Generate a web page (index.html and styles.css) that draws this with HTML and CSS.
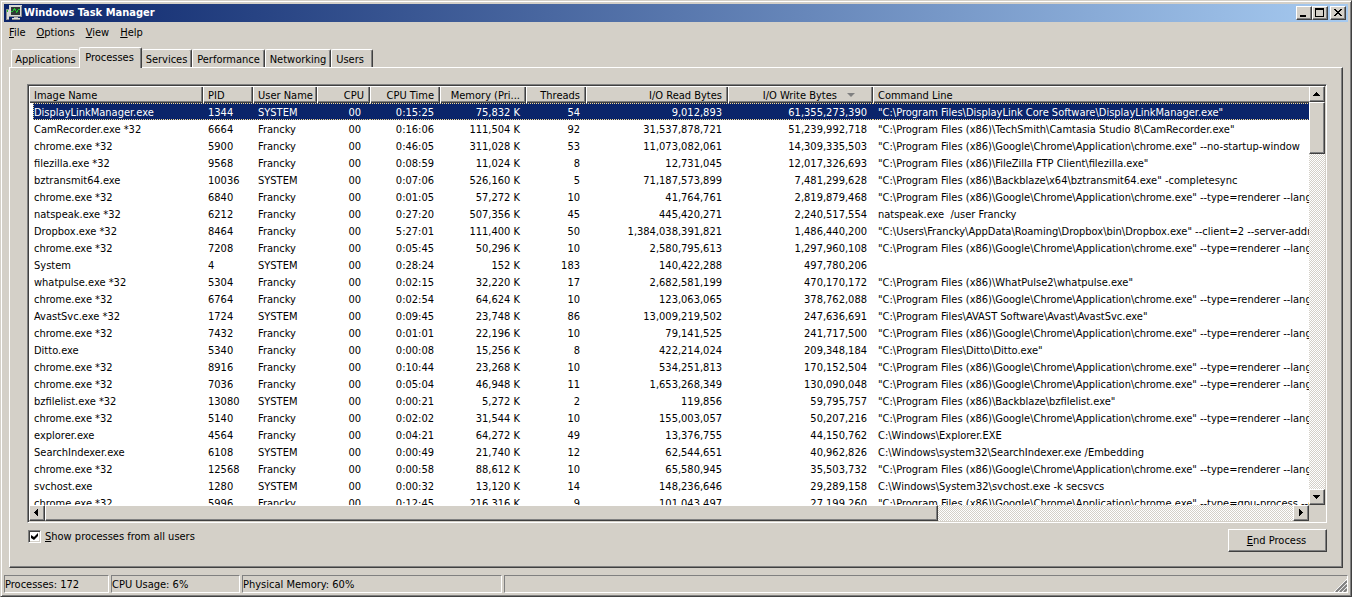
FILE: index.html
```html
<!DOCTYPE html>
<html lang="en">
<head>
<meta charset="utf-8">
<title>Windows Task Manager</title>
<link rel="stylesheet" href="styles.css">
</head>
<body>
<div class="window">
  <header class="titlebar">
    <svg class="app-icon" width="16" height="16" viewBox="0 0 16 16" shape-rendering="crispEdges" aria-hidden="true">
      <path fill="#8c8c8c" d="M0 4h3v11H0z"/><path fill="#d8d8d8" d="M1 5h2v9H1z"/><path fill="#30c030" d="M1 5h1v2H1z"/>
      <path fill="#d8d8d4" d="M3 0h13v12H3z"/><path fill="#8c8c8c" d="M3 11h13v1H3zM15 1h1v11h-1z"/>
      <path fill="#303834" d="M5 2h9v8H5z"/>
      <path fill="#20c030" d="M5 6h2v1H5zM7 4h1v2H7zM8 3h1v2H8zM9 4h1v2H9zM10 6h1v2h-1zM11 5h1v2h-1zM12 4h2v1h-2z"/>
      <path fill="#b8b8b8" d="M8 12h4v1H8z"/><path fill="#e0e0dc" d="M6 13h8v1H6z"/><path fill="#909090" d="M6 14h8v1H6z"/>
    </svg>
    <h1 class="title">Windows Task Manager</h1>
    <button class="caption" aria-label="Minimize"><svg width="12" height="10" shape-rendering="crispEdges"><path d="M2 7h6v2H2z"/></svg></button>
    <button class="caption" aria-label="Maximize"><svg width="12" height="10" shape-rendering="crispEdges"><path fill-rule="evenodd" d="M1 0h9v9H1zM2 2v6h7V2z"/></svg></button>
    <button class="caption close" aria-label="Close"><svg width="12" height="10" shape-rendering="crispEdges"><path d="M2 1h2v1h1v1h2V2h1V1h2v1H9v1H8v1H7v1h1v1h1v1h1v1H8V7H7V6H5v1H4v1H2V7h1V6h1V5h1V4H4V3H3V2H2z"/></svg></button>
  </header>
  <nav class="menubar">
    <button><u>F</u>ile</button>
    <button><u>O</u>ptions</button>
    <button><u>V</u>iew</button>
    <button><u>H</u>elp</button>
  </nav>
  <div class="tabs" role="tablist">
    <button class="tab tab-applications" role="tab">Applications</button>
    <button class="tab tab-processes active" role="tab" aria-selected="true">Processes</button>
    <button class="tab tab-services" role="tab">Services</button>
    <button class="tab tab-performance" role="tab">Performance</button>
    <button class="tab tab-networking" role="tab">Networking</button>
    <button class="tab tab-users" role="tab">Users</button>
  </div>
  <main class="panel">
    <div class="list">
      <div class="viewport">
        <table class="processes">
          <colgroup><col class="c-name"><col class="c-pid"><col class="c-user"><col class="c-cpu"><col class="c-time"><col class="c-mem"><col class="c-threads"><col class="c-read"><col class="c-write"><col></colgroup>
          <thead>
            <tr><th>Image Name</th><th>PID</th><th>User Name</th><th>CPU</th><th>CPU Time</th><th>Memory (Pri...</th><th>Threads</th><th>I/O Read Bytes</th><th>I/O Write Bytes<span class="sort"></span></th><th>Command Line</th></tr>
          </thead>
          <tbody>
            <tr class="selected"><td>DisplayLinkManager.exe</td><td>1344</td><td>SYSTEM</td><td>00</td><td>0:15:25</td><td>75,832 K</td><td>54</td><td>9,012,893</td><td>61,355,273,390</td><td>"C:\Program Files\DisplayLink Core Software\DisplayLinkManager.exe"</td></tr>
            <tr><td>CamRecorder.exe *32</td><td>6664</td><td>Francky</td><td>00</td><td>0:16:06</td><td>111,504 K</td><td>92</td><td>31,537,878,721</td><td>51,239,992,718</td><td>"C:\Program Files (x86)\TechSmith\Camtasia Studio 8\CamRecorder.exe"</td></tr>
            <tr><td>chrome.exe *32</td><td>5900</td><td>Francky</td><td>00</td><td>0:46:05</td><td>311,028 K</td><td>53</td><td>11,073,082,061</td><td>14,309,335,503</td><td>"C:\Program Files (x86)\Google\Chrome\Application\chrome.exe" --no-startup-window</td></tr>
            <tr><td>filezilla.exe *32</td><td>9568</td><td>Francky</td><td>00</td><td>0:08:59</td><td>11,024 K</td><td>8</td><td>12,731,045</td><td>12,017,326,693</td><td>"C:\Program Files (x86)\FileZilla FTP Client\filezilla.exe"</td></tr>
            <tr><td>bztransmit64.exe</td><td>10036</td><td>SYSTEM</td><td>00</td><td>0:07:06</td><td>526,160 K</td><td>5</td><td>71,187,573,899</td><td>7,481,299,628</td><td>"C:\Program Files (x86)\Backblaze\x64\bztransmit64.exe" -completesync</td></tr>
            <tr><td>chrome.exe *32</td><td>6840</td><td>Francky</td><td>00</td><td>0:01:05</td><td>57,272 K</td><td>10</td><td>41,764,761</td><td>2,819,879,468</td><td>"C:\Program Files (x86)\Google\Chrome\Application\chrome.exe" --type=renderer --lang=</td></tr>
            <tr><td>natspeak.exe *32</td><td>6212</td><td>Francky</td><td>00</td><td>0:27:20</td><td>507,356 K</td><td>45</td><td>445,420,271</td><td>2,240,517,554</td><td>natspeak.exe&nbsp; /user Francky</td></tr>
            <tr><td>Dropbox.exe *32</td><td>8464</td><td>Francky</td><td>00</td><td>5:27:01</td><td>111,400 K</td><td>50</td><td>1,384,038,391,821</td><td>1,486,440,200</td><td>"C:\Users\Francky\AppData\Roaming\Dropbox\bin\Dropbox.exe" --client=2 --server-addr</td></tr>
            <tr><td>chrome.exe *32</td><td>7208</td><td>Francky</td><td>00</td><td>0:05:45</td><td>50,296 K</td><td>10</td><td>2,580,795,613</td><td>1,297,960,108</td><td>"C:\Program Files (x86)\Google\Chrome\Application\chrome.exe" --type=renderer --lang=</td></tr>
            <tr><td>System</td><td>4</td><td>SYSTEM</td><td>00</td><td>0:28:24</td><td>152 K</td><td>183</td><td>140,422,288</td><td>497,780,206</td><td></td></tr>
            <tr><td>whatpulse.exe *32</td><td>5304</td><td>Francky</td><td>00</td><td>0:02:15</td><td>32,220 K</td><td>17</td><td>2,682,581,199</td><td>470,170,172</td><td>"C:\Program Files (x86)\WhatPulse2\whatpulse.exe"</td></tr>
            <tr><td>chrome.exe *32</td><td>6764</td><td>Francky</td><td>00</td><td>0:02:54</td><td>64,624 K</td><td>10</td><td>123,063,065</td><td>378,762,088</td><td>"C:\Program Files (x86)\Google\Chrome\Application\chrome.exe" --type=renderer --lang=</td></tr>
            <tr><td>AvastSvc.exe *32</td><td>1724</td><td>SYSTEM</td><td>00</td><td>0:09:45</td><td>23,748 K</td><td>86</td><td>13,009,219,502</td><td>247,636,691</td><td>"C:\Program Files\AVAST Software\Avast\AvastSvc.exe"</td></tr>
            <tr><td>chrome.exe *32</td><td>7432</td><td>Francky</td><td>00</td><td>0:01:01</td><td>22,196 K</td><td>10</td><td>79,141,525</td><td>241,717,500</td><td>"C:\Program Files (x86)\Google\Chrome\Application\chrome.exe" --type=renderer --lang=</td></tr>
            <tr><td>Ditto.exe</td><td>5340</td><td>Francky</td><td>00</td><td>0:00:08</td><td>15,256 K</td><td>8</td><td>422,214,024</td><td>209,348,184</td><td>"C:\Program Files\Ditto\Ditto.exe"</td></tr>
            <tr><td>chrome.exe *32</td><td>8916</td><td>Francky</td><td>00</td><td>0:10:44</td><td>23,268 K</td><td>10</td><td>534,251,813</td><td>170,152,504</td><td>"C:\Program Files (x86)\Google\Chrome\Application\chrome.exe" --type=renderer --lang=</td></tr>
            <tr><td>chrome.exe *32</td><td>7036</td><td>Francky</td><td>00</td><td>0:05:04</td><td>46,948 K</td><td>11</td><td>1,653,268,349</td><td>130,090,048</td><td>"C:\Program Files (x86)\Google\Chrome\Application\chrome.exe" --type=renderer --lang=</td></tr>
            <tr><td>bzfilelist.exe *32</td><td>13080</td><td>SYSTEM</td><td>00</td><td>0:00:21</td><td>5,272 K</td><td>2</td><td>119,856</td><td>59,795,757</td><td>"C:\Program Files (x86)\Backblaze\bzfilelist.exe"</td></tr>
            <tr><td>chrome.exe *32</td><td>5140</td><td>Francky</td><td>00</td><td>0:02:02</td><td>31,544 K</td><td>10</td><td>155,003,057</td><td>50,207,216</td><td>"C:\Program Files (x86)\Google\Chrome\Application\chrome.exe" --type=renderer --lang=</td></tr>
            <tr><td>explorer.exe</td><td>4564</td><td>Francky</td><td>00</td><td>0:04:21</td><td>64,272 K</td><td>49</td><td>13,376,755</td><td>44,150,762</td><td>C:\Windows\Explorer.EXE</td></tr>
            <tr><td>SearchIndexer.exe</td><td>6108</td><td>SYSTEM</td><td>00</td><td>0:00:49</td><td>21,740 K</td><td>12</td><td>62,544,651</td><td>40,962,826</td><td>C:\Windows\system32\SearchIndexer.exe /Embedding</td></tr>
            <tr><td>chrome.exe *32</td><td>12568</td><td>Francky</td><td>00</td><td>0:00:58</td><td>88,612 K</td><td>10</td><td>65,580,945</td><td>35,503,732</td><td>"C:\Program Files (x86)\Google\Chrome\Application\chrome.exe" --type=renderer --lang=</td></tr>
            <tr><td>svchost.exe</td><td>1280</td><td>SYSTEM</td><td>00</td><td>0:00:32</td><td>13,120 K</td><td>14</td><td>148,236,646</td><td>29,289,158</td><td>C:\Windows\System32\svchost.exe -k secsvcs</td></tr>
            <tr><td>chrome.exe *32</td><td>5996</td><td>Francky</td><td>00</td><td>0:12:45</td><td>216,316 K</td><td>9</td><td>101,043,497</td><td>27,199,260</td><td>"C:\Program Files (x86)\Google\Chrome\Application\chrome.exe" --type=gpu-process --ch</td></tr>
          </tbody>
        </table>
      </div>
      <div class="scroll vertical">
        <button class="arrow" aria-label="Scroll up"><svg width="8" height="8" shape-rendering="crispEdges"><path d="M3 2h1v1h1v1h1v1h1v1H0V5h1V4h1V3h1z"/></svg></button>
        <div class="thumb"></div>
        <button class="arrow" aria-label="Scroll down"><svg width="8" height="8" shape-rendering="crispEdges"><path d="M0 2h7v1H6v1H5v1H4v1H3V5H2V4H1V3H0z"/></svg></button>
      </div>
      <div class="scroll horizontal">
        <button class="arrow" aria-label="Scroll left"><svg width="8" height="8" shape-rendering="crispEdges"><path d="M5 0v7H4V6H3V5H2V4H1V3h1V2h1V1h1V0z"/></svg></button>
        <div class="thumb"></div>
        <button class="arrow" aria-label="Scroll right"><svg width="8" height="8" shape-rendering="crispEdges"><path d="M2 0h1v1h1v1h1v1h1v1H5v1H4v1H3v1H2z"/></svg></button>
      </div>
    </div>
    <div class="actions">
      <label class="show-all"><input type="checkbox" checked><span><u>S</u>how processes from all users</span></label>
      <button class="end"><u>E</u>nd Process</button>
    </div>
  </main>
  <footer class="statusbar">
    <div class="status s-processes">Processes: 172</div>
    <div class="status s-cpu">CPU Usage: 6%</div>
    <div class="status s-memory">Physical Memory: 60%</div>
    <div class="status s-rest"><svg width="13" height="13" viewBox="0 0 13 13" aria-hidden="true"><path stroke="#fff" d="M0 13L13 0M4 13L13 4M8 13L13 8"/><path stroke="#808080" stroke-width="2" d="M2 13L13 2M6 13L13 6M10 13L13 10"/></svg></div>
  </footer>
</div>
</body>
</html>
```

FILE: styles.css
```css
:root {
  --face: #d4d0c8;
  --shadow: #808080;
  --dark: #404040;
  --navy: #0a246a;
}

* { box-sizing: border-box; }

body {
  margin: 0;
  background: var(--face);
  color: #000;
  font: 11px/13px "DejaVu Sans Condensed", Tahoma, sans-serif;
}

button {
  margin: 0;
  padding: 0;
  border: 0;
  background: var(--face);
  color: inherit;
  font: inherit;
  white-space: nowrap;
}

svg { display: block; }

.window {
  display: flex;
  flex-direction: column;
  height: 100vh;
  padding: 3px;
  border: 1px solid;
  border-color: var(--face) var(--dark) var(--dark) var(--face);
  box-shadow: inset 1px 1px #fff, inset -1px -1px var(--shadow);
}

.titlebar {
  display: flex;
  align-items: center;
  height: 18px;
  padding: 0 2px;
  background: linear-gradient(to right, var(--navy), #a6caf0);
}

.app-icon { flex: none; }

.title {
  flex: 1;
  margin: 0 0 0 2px;
  color: #fff;
  font-size: 11px;
  line-height: 18px;
}

.caption, .arrow, .thumb, .end {
  border: 1px solid;
  border-color: #fff var(--dark) var(--dark) #fff;
  box-shadow: inset -1px -1px var(--shadow);
  background: var(--face);
}

.caption {
  width: 16px;
  height: 14px;
  padding: 1px;
}

.close { margin-left: 2px; }

.menubar {
  display: flex;
  gap: 11px;
  height: 20px;
  padding-left: 5px;
}

.tabs {
  display: flex;
  align-items: flex-end;
  height: 26px;
  margin-bottom: -1px;
  padding-left: 7px;
}

.tab {
  height: 18px;
  margin-bottom: 1px;
  padding-top: 2px;
  border: 1px solid;
  border-color: #fff var(--dark) transparent #fff;
  border-bottom: 0;
  border-radius: 2px 2px 0 0;
  box-shadow: inset -1px 0 var(--shadow);
}

.tab.active {
  z-index: 1;
  height: 21px;
  margin-bottom: 0;
  padding: 0 2px 1px 0;
}

.tab-applications { width: 68px; border-right: 0; box-shadow: none; }
.tab-processes { width: 63px; }
.tab-services { width: 50px; border-left: 0; }
.tab-performance { width: 73px; }
.tab-networking { width: 66px; }
.tab-users { width: 42px; padding-right: 4px; }

.panel {
  display: flex;
  flex: 1;
  flex-direction: column;
  min-height: 0;
  margin: 0 5px;
  padding: 16px 15px 15px 17px;
  border: 1px solid;
  border-color: #fff var(--dark) var(--dark) #fff;
  box-shadow: inset -1px -1px var(--shadow);
}

.list {
  display: grid;
  flex: 1;
  grid-template: minmax(0, 1fr) 16px / minmax(0, 1fr) 16px;
  min-height: 0;
  padding: 1px;
  border: 1px solid;
  border-color: var(--shadow) #fff #fff var(--shadow);
  box-shadow: inset 1px 1px var(--dark), inset -1px -1px var(--face);
}

.viewport {
  overflow: hidden;
  background: #fff;
}

.processes {
  width: 100%;
  border-collapse: separate;
  border-spacing: 0;
  table-layout: fixed;
}

.c-name { width: 174px; }
.c-pid { width: 50px; }
.c-user { width: 64px; }
.c-cpu { width: 53px; }
.c-time { width: 70px; }
.c-mem { width: 86px; }
.c-threads { width: 60px; }
.c-read { width: 142px; }
.c-write { width: 145px; }

th, td {
  height: 17px;
  padding: 1px 5px 0;
  overflow: hidden;
  font-weight: normal;
  text-align: left;
  white-space: nowrap;
}

th {
  background: var(--face);
  box-shadow: inset 1px 1px #fff, inset -1px -1px var(--dark), inset -2px -2px var(--shadow);
}

th:last-child { box-shadow: inset 1px 1px #fff, inset 0 -1px var(--dark), inset 0 -2px var(--shadow); }

th:nth-child(n+4):nth-child(-n+9),
td:nth-child(n+4):nth-child(-n+9) {
  padding-right: 6px;
  text-align: right;
}

td:nth-child(4):nth-child(n) { padding-right: 9px; }

td:last-child { padding-right: 0; }

.sort {
  display: inline-block;
  margin: 0 12px 2px 10px;
  border: 4px solid transparent;
  border-top-color: var(--shadow);
  border-bottom: 0;
}

.selected td {
  background:
    repeating-linear-gradient(to right, #f5db95 0 1px, transparent 1px 2px) 0 0 / 100% 1px no-repeat,
    repeating-linear-gradient(to right, #f5db95 0 1px, transparent 1px 2px) 0 100% / 100% 1px no-repeat,
    var(--navy);
  color: #fff;
}

.selected td:first-child {
  background:
    linear-gradient(#fff, #fff) 0 0 / 4px 100% no-repeat,
    repeating-linear-gradient(#f5db95 0 1px, transparent 1px 2px) 4px 0 / 1px 100% no-repeat,
    repeating-linear-gradient(to right, #f5db95 0 1px, transparent 1px 2px) 0 0 / 100% 1px no-repeat,
    repeating-linear-gradient(to right, #f5db95 0 1px, transparent 1px 2px) 0 100% / 100% 1px no-repeat,
    var(--navy);
}

.scroll {
  display: flex;
  justify-content: space-between;
  background: repeating-conic-gradient(#fff 0 25%, var(--face) 0 50%) 0 0 / 2px 2px;
}

.vertical { flex-direction: column; }

.arrow {
  display: grid;
  flex: none;
  place-content: center;
  width: 16px;
  height: 16px;
}

.vertical .thumb { flex: 0 0 52px; margin-bottom: auto; }
.horizontal .thumb { flex: 0 0 893px; margin-right: auto; }

.actions {
  display: flex;
  align-items: flex-start;
  justify-content: space-between;
  padding-top: 6px;
}

.show-all {
  display: flex;
  align-items: center;
  gap: 4px;
  height: 15px;
  padding-left: 1px;
}

input[type="checkbox"] {
  display: grid;
  place-content: center;
  width: 13px;
  height: 13px;
  margin: 0;
  border: 1px solid;
  border-color: var(--shadow) #fff #fff var(--shadow);
  box-shadow: inset 1px 1px var(--dark), inset -1px -1px var(--face);
  background: #fff;
  appearance: none;
}

input[type="checkbox"]:checked::before {
  width: 7px;
  height: 7px;
  background: #000;
  clip-path: polygon(0 2px, 3px 4px, 7px 0, 7px 3px, 3px 7px, 0 5px);
  content: "";
}

.end {
  width: 99px;
  height: 23px;
  padding-right: 2px;
}

.statusbar {
  display: flex;
  gap: 2px;
  margin-top: 7px;
}

.status {
  height: 18px;
  padding: 2px 0 0;
  border: 1px solid;
  border-color: var(--shadow) #fff #fff var(--shadow);
  white-space: nowrap;
}

.s-processes { width: 105px; }
.s-cpu { width: 129px; }
.s-memory { width: 260px; }

.s-rest {
  display: flex;
  flex: 1;
  align-items: flex-end;
  justify-content: flex-end;
}
```
